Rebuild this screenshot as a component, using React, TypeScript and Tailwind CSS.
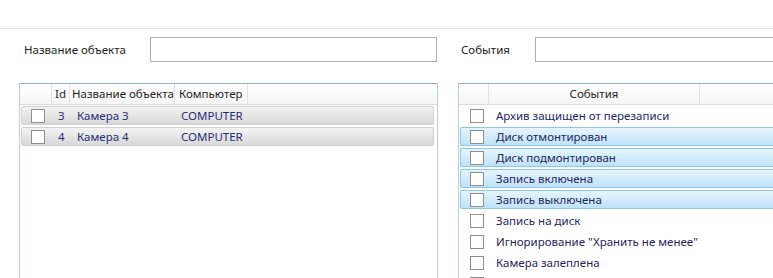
import React from "react";

const font = { fontFamily: '"Noto Sans", "Open Sans", sans-serif' };

function Box() {
  return <div className="w-[14px] h-[14px] border border-[#8e8f8f] bg-white shrink-0" />;
}

const events = [
  { t: "Архив защищен от перезаписи", sel: false },
  { t: "Диск отмонтирован", sel: true },
  { t: "Диск подмонтирован", sel: true },
  { t: "Запись включена", sel: true },
  { t: "Запись выключена", sel: true },
  { t: "Запись на диск", sel: false },
  { t: "Игнорирование \"Хранить не менее\"", sel: false },
  { t: "Камера залеплена", sel: false },
  { t: "", sel: false },
];

export default function App() {
  return (
    <div className="w-[773px] h-[278px] overflow-hidden bg-white text-[11.5px] text-[#1e1e1e]" style={font}>
      <div className="h-[29px] border-b border-[#e3e3e3]" />
      <div className="flex items-center h-[25px] mt-[8px] whitespace-nowrap">
        <div className="w-[150px] shrink-0 pl-[24px] leading-[25px]">Название объекта</div>
        <div className="w-[287px] shrink-0 h-[25px] border border-[#abadb3] bg-white" />
        <div className="w-[98px] shrink-0 pl-[24px] leading-[25px]">События</div>
        <div className="w-[260px] h-[25px] border border-[#abadb3] bg-white shrink-0" />
      </div>
      <div className="flex mt-[21px] whitespace-nowrap">
        {/* Left grid */}
        <div className="ml-[19px] w-[419px] h-[200px] border border-[#b5d1de] border-t-[#8fb3c4] shrink-0">
          <div className="flex h-[21px] border-b border-[#dcdcdc] bg-gradient-to-b from-white to-[#f6f6f6] leading-[20px]">
            <div className="w-[32px] shrink-0 border-r border-[#e2e2e2]" />
            <div className="w-[18px] shrink-0 border-r border-[#e2e2e2] pl-[3px]">Id</div>
            <div className="w-[105px] shrink-0 border-r border-[#e2e2e2] pl-[2px]">Название объекта</div>
            <div className="w-[73px] shrink-0 border-r border-[#e2e2e2] pl-[4px]">Компьютер</div>
          </div>
          {[
            { id: "3", n: "Камера 3" },
            { id: "4", n: "Камера 4" },
          ].map((r) => (
            <div key={r.id} className="h-[21px] py-[1px] px-[1px]">
              <div className="h-[19px] w-[413px] flex items-center rounded-[2px] border border-[#d0d0d0] bg-gradient-to-b from-[#f3f3f3] to-[#d9d9d9] text-[#1f2d78]">
                <div className="w-[31px] shrink-0 pl-[9px]"><Box /></div>
                <div className="w-[24px] shrink-0 pl-[5px]">{r.id}</div>
                <div className="w-[104px] shrink-0">{r.n}</div>
                <div>COMPUTER</div>
              </div>
            </div>
          ))}
        </div>
        {/* Right grid */}
        <div className="ml-[20px] w-[330px] h-[200px] border border-[#b5d1de] border-t-[#8fb3c4] border-r-0 shrink-0">
          <div className="flex h-[21px] border-b border-[#dcdcdc] bg-gradient-to-b from-white to-[#f6f6f6] leading-[20px]">
            <div className="w-[30px] shrink-0 border-r border-[#e2e2e2]" />
            <div className="w-[211px] shrink-0 border-r border-[#e2e2e2] text-center">События</div>
          </div>
          {events.map((e, i) => (
            <div key={i} className="h-[21px] py-[1px] pl-[1px]">
              <div
                className={
                  "h-[19px] flex items-center rounded-l-[2px] border border-r-0 text-[#1f2560] " +
                  (e.sel
                    ? "border-[#8dc5ec] bg-gradient-to-b from-[#e6f5fd] to-[#bfe2f8]"
                    : "border-transparent")
                }
              >
                <div className="w-[35px] shrink-0 pl-[9px]"><Box /></div>
                <div className="whitespace-nowrap">{e.t}</div>
              </div>
            </div>
          ))}
        </div>
      </div>
    </div>
  );
}
